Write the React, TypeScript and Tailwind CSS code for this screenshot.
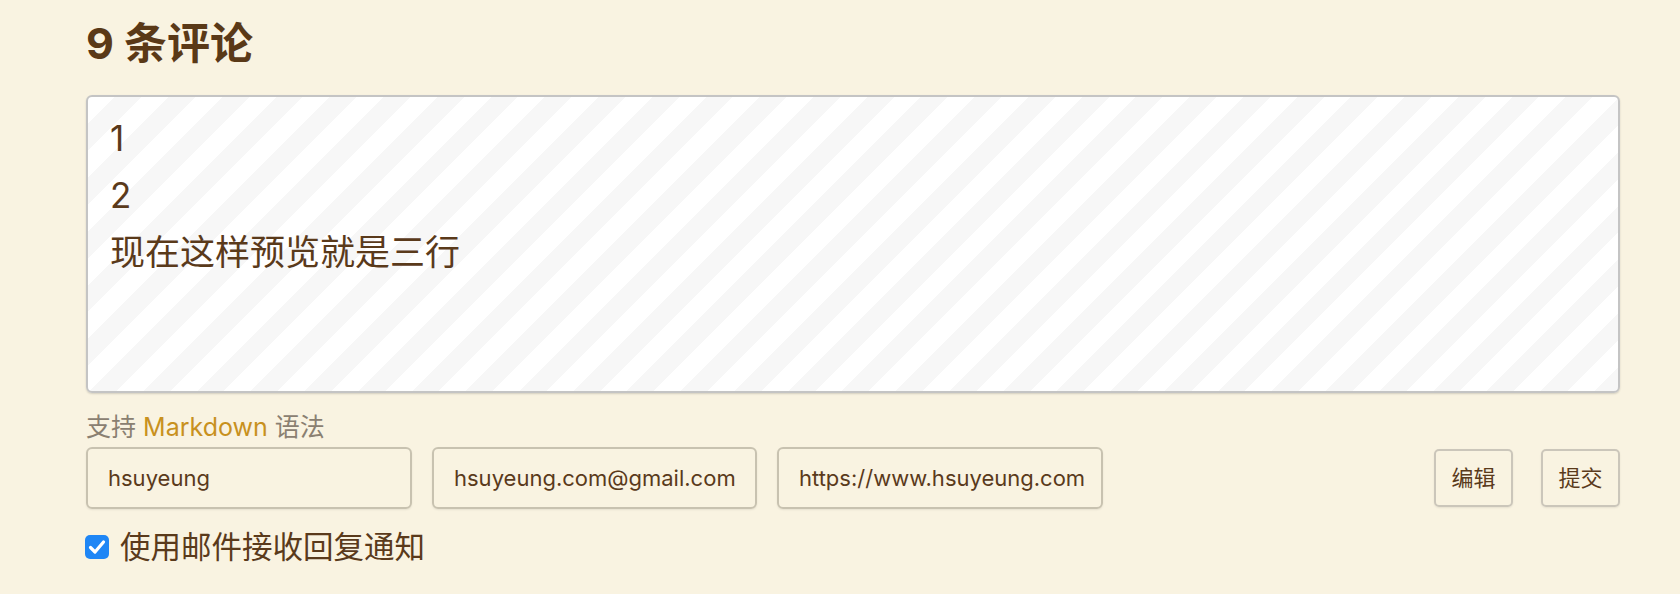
import React from "react";

const FONT = "font-['Inter','Noto_Sans_CJK_SC',sans-serif]";

export default function App() {
  return (
    <div className={`min-h-[594px] w-full bg-[#f9f3e1] ${FONT} text-[#5a3a1b]`}>
      <div className="pl-[86px] pr-[60px] pt-[17px] pb-[20px]">
        <h2 className="text-[43px] leading-[52px] font-bold text-[#5a3917]">9 条评论</h2>

        <div className="mt-[26px] h-[298px] rounded-[6px] border-2 border-[#c4c4c4] bg-[repeating-linear-gradient(135deg,#ffffff_0px,#ffffff_19px,#f7f7f7_19px,#f7f7f7_38px)] shadow-[0_1px_2px_rgba(0,0,0,0.15)] px-[22px] pt-[13px]">
          <div className="text-[35px] leading-[57px]">
            <div>1</div>
            <div>2</div>
            <div>现在这样预览就是三行</div>
          </div>
        </div>

        <div className="mt-[18px] text-[25px] leading-[32px] text-[#8a8071]">
          支持 <span className="text-[#c8911e]">Markdown</span> 语法
        </div>

        <div className="mt-[4px] flex items-center">
          <div className="flex gap-[20px]">
            <div className="flex h-[62px] w-[326px] items-center rounded-[6px] border-2 border-[#c8c2b0] px-[20px] text-[22px] shadow-[0_1px_2px_rgba(0,0,0,0.08)]">
              hsuyeung
            </div>
            <div className="flex h-[62px] w-[325px] items-center rounded-[6px] border-2 border-[#c8c2b0] px-[20px] text-[22px] shadow-[0_1px_2px_rgba(0,0,0,0.08)]">
              hsuyeung.com@gmail.com
            </div>
            <div className="flex h-[62px] w-[326px] items-center rounded-[6px] border-2 border-[#c8c2b0] px-[20px] text-[22px] shadow-[0_1px_2px_rgba(0,0,0,0.08)]">
              https://www.hsuyeung.com
            </div>
          </div>
          <div className="ml-auto flex gap-[28px]">
            <button className="flex h-[58px] w-[79px] items-center justify-center rounded-[5px] border-2 border-[#cbc6ba] text-[22px] shadow-[0_1px_2px_rgba(0,0,0,0.08)]">
              编辑
            </button>
            <button className="flex h-[58px] w-[79px] items-center justify-center rounded-[5px] border-2 border-[#cbc6ba] text-[22px] shadow-[0_1px_2px_rgba(0,0,0,0.08)]">
              提交
            </button>
          </div>
        </div>

        <div className="mt-[18px] flex h-[40px] items-center">
          <span className="-ml-[1px] flex h-[24px] w-[24px] items-center justify-center rounded-[5px] bg-[#1f86f5]">
            <svg width="24" height="24" viewBox="0 0 24 24" fill="none">
              <path d="M5.5 12.5 L10 17 L18.5 7" stroke="#ffffff" strokeWidth="3.2" strokeLinecap="round" strokeLinejoin="round" />
            </svg>
          </span>
          <span className="ml-[11px] text-[30.5px] leading-[40px]">使用邮件接收回复通知</span>
        </div>
      </div>
    </div>
  );
}
